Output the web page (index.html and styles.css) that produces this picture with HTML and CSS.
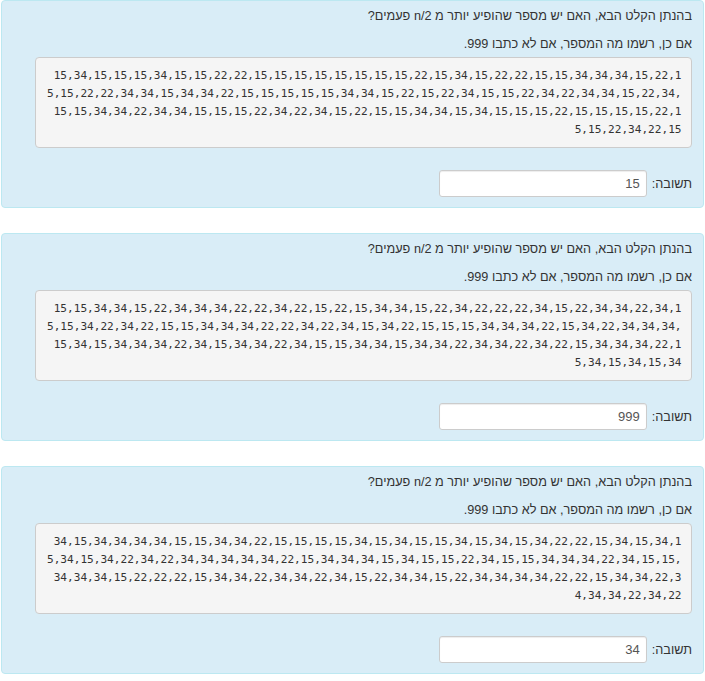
FILE: index.html
```html
<!DOCTYPE html>
<html lang="he">
<head>
<meta charset="utf-8">
<title>שאלות</title>
<link rel="stylesheet" href="styles.css">
</head>
<body>
<div class="page">
  <div class="panel">
    <p class="q">בהנתן הקלט הבא, האם יש מספר שהופיע יותר מ n/2 פעמים?</p>
    <p class="q q2">אם כן, רשמו מה המספר, אם לא כתבו 999.</p>
    <pre class="data">15,34,15,15,15,34,15,15,22,22,15,15,15,15,15,15,15,15,22,15,34,15,22,22,15,15,34,34,34,15,22,1
5,15,22,22,34,34,15,34,34,22,15,15,15,15,15,34,34,15,22,15,22,34,15,15,22,34,22,34,34,15,22,34,
15,15,34,34,22,34,34,15,15,15,22,34,22,34,15,22,15,15,34,34,15,34,15,15,15,22,15,15,15,15,22,1
5,15,22,34,22,15</pre>
    <div class="answer">
      <label class="label">תשובה:</label>
      <input class="field" type="text" value="15">
    </div>
  </div>

  <div class="panel">
    <p class="q">בהנתן הקלט הבא, האם יש מספר שהופיע יותר מ n/2 פעמים?</p>
    <p class="q q2">אם כן, רשמו מה המספר, אם לא כתבו 999.</p>
    <pre class="data">15,15,34,34,15,22,34,34,34,22,22,34,22,15,22,15,34,34,15,22,34,22,22,22,34,15,22,34,34,22,34,1
5,15,34,22,34,22,15,15,34,34,34,22,22,34,22,34,15,34,22,15,15,15,34,34,34,22,15,34,22,34,34,34,
15,34,15,34,34,34,22,34,15,34,34,22,34,15,15,34,34,15,34,34,22,34,34,22,34,22,15,34,34,34,22,1
5,34,15,34,15,34</pre>
    <div class="answer">
      <label class="label">תשובה:</label>
      <input class="field" type="text" value="999">
    </div>
  </div>

  <div class="panel">
    <p class="q">בהנתן הקלט הבא, האם יש מספר שהופיע יותר מ n/2 פעמים?</p>
    <p class="q q2">אם כן, רשמו מה המספר, אם לא כתבו 999.</p>
    <pre class="data">34,15,34,34,34,34,15,15,34,34,22,15,15,15,15,34,15,34,15,15,34,15,34,15,34,22,22,15,34,15,34,1
5,34,15,34,22,34,22,34,34,34,34,34,22,15,34,34,34,15,34,15,15,22,34,15,15,34,34,34,22,34,15,15,
34,34,34,15,22,22,22,15,34,34,22,34,34,22,34,15,22,34,34,15,22,34,34,34,34,22,22,15,34,34,22,3
4,34,34,22,34,22</pre>
    <div class="answer">
      <label class="label">תשובה:</label>
      <input class="field" type="text" value="34">
    </div>
  </div>
</div>
</body>
</html>
```

FILE: styles.css
```css
html, body {
  margin: 0;
  padding: 0;
  background: #ffffff;
}

body {
  font-family: "Liberation Sans", Arial, sans-serif;
  font-size: 12.7px;
  color: #333333;
}

.page {
  padding: 0 1px;
}

.panel {
  direction: rtl;
  background: #d9edf7;
  border: 1px solid #bce8f1;
  border-radius: 4px;
  padding: 6px 11px 10px 33px;
  margin-bottom: 25px;
}

.q {
  margin: 0 0 10px 0;
  line-height: 18px;
  text-align: right;
}

.q2 {
  margin-bottom: 4px;
}

.data {
  direction: ltr;
  text-align: right;
  margin: 0;
  padding: 9px 9.5px 8px 10px;
  background: #f5f5f5;
  border: 1px solid #cccccc;
  border-radius: 4px;
  font-family: "DejaVu Sans Mono", "Liberation Mono", monospace;
  font-size: 11.1px;
  line-height: 18px;
  color: #333333;
  white-space: pre;
}

.answer {
  display: flex;
  align-items: center;
  gap: 5px;
  margin-top: 22px;
}

.label {
  line-height: 18px;
}

.field {
  direction: rtl;
  box-sizing: border-box;
  width: 208px;
  height: 27px;
  margin: 0;
  padding: 0 6px;
  border: 1px solid #cccccc;
  border-radius: 3px;
  background: #ffffff;
  font-family: "Liberation Sans", Arial, sans-serif;
  font-size: 13px;
  color: #555555;
  box-shadow: inset 0 1px 1px rgba(0, 0, 0, 0.075);
}
```
